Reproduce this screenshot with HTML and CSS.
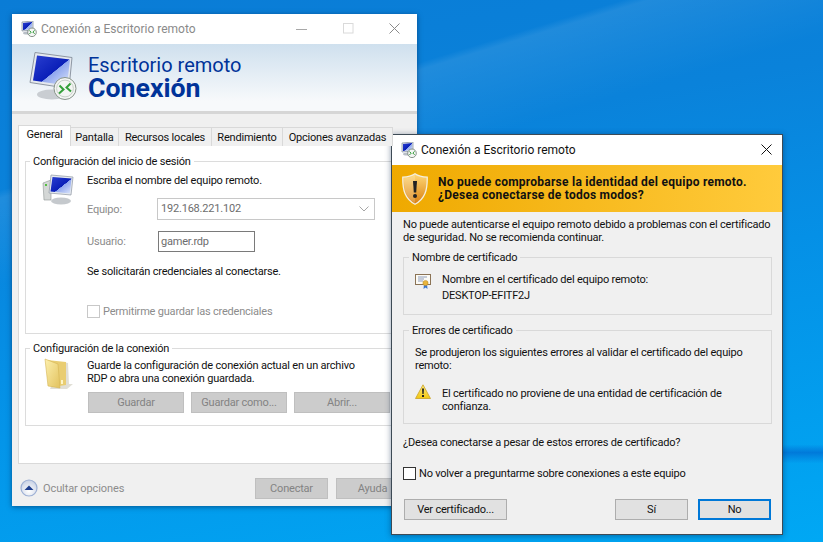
FILE: index.html
```html
<!DOCTYPE html>
<html lang="es">
<head>
<meta charset="utf-8">
<title>Conexión a Escritorio remoto</title>
<link rel="stylesheet" href="styles.css">
</head>
<body>
<svg class="defs" width="0" height="0" aria-hidden="true">
  <defs>
    <linearGradient id="scr" x1="0" y1="0" x2="1" y2="1"><stop offset="0" stop-color="#2a3fd0"/><stop offset=".55" stop-color="#0a1fb8"/><stop offset=".56" stop-color="#8fa6ee"/><stop offset="1" stop-color="#dfe8fb"/></linearGradient>
    <linearGradient id="shield" x1="0" y1="0" x2="0" y2="1"><stop offset="0" stop-color="#ffd877"/><stop offset="1" stop-color="#d97f10"/></linearGradient>
    <linearGradient id="folder" x1="0" y1="0" x2="1" y2="1"><stop offset="0" stop-color="#fdf0ae"/><stop offset="1" stop-color="#e2c25e"/></linearGradient>
    <linearGradient id="tri" x1="0" y1="0" x2="0" y2="1"><stop offset="0" stop-color="#ffe97a"/><stop offset="1" stop-color="#f2c811"/></linearGradient>
    <radialGradient id="orb" cx=".5" cy=".7" r=".7"><stop offset="0" stop-color="#ffffff"/><stop offset="1" stop-color="#c6d0e4"/></radialGradient>
    <symbol id="app" viewBox="0 0 16 16">
      <path d="M1 1 12 0 12 9 1 10Z" fill="#dfe3ea" stroke="#7f8a99" stroke-width=".7"/>
      <path d="M2 2 11 1 11 8 2 9Z" fill="url(#scr)"/>
      <ellipse cx="6" cy="12" rx="4" ry="1.6" fill="#b8bec6"/>
      <circle cx="11" cy="11.3" r="4.3" fill="#f4f6f4" stroke="#6d7a70" stroke-width=".8"/>
      <path d="M8.4 9.600 10.200 11.200 8.400 13M13.600 9.400 11.800 11 13.600 12.800" fill="none" stroke="#2f9a35" stroke-width="1"/>
    </symbol>
  </defs>
</svg>

<section class="win win-main">
  <header class="titlebar">
    <svg class="ic16"><use href="#app"/></svg>
    <span class="title title-off">Conexión a Escritorio remoto</span>
    <span class="ctrls">
      <svg class="c-min" width="12" height="12" viewBox="0 0 12 12"><path d="M0 6.5H11" stroke="#a8a8a8"/></svg>
      <svg width="12" height="12" viewBox="0 0 12 12"><rect x=".5" y=".5" width="9.5" height="9.5" fill="none" stroke="#dadada"/></svg>
      <svg width="12" height="12" viewBox="0 0 12 12"><path d="M.5.5 10.5 10.5M10.5.5.5 10.5" stroke="#8a8a8a" fill="none"/></svg>
    </span>
  </header>
  <div class="banner">
    <svg class="banner-ic" viewBox="0 0 48 48">
      <ellipse cx="23" cy="42" rx="15" ry="5" fill="#c9cdd2"/>
      <path d="M6 0 43 5 40 36 1 30Z" fill="#e4e8ee" stroke="#8e97a3"/>
      <path d="M8 3 41 7 38 33 4 28Z" fill="url(#scr)"/>
      <circle cx="36" cy="36" r="11" fill="#f3f5f3" stroke="#87938a"/>
      <circle cx="36" cy="36" r="8.4" fill="none" stroke="#c7cfc9"/>
      <path d="M30.500 33 34.500 37 30 41M41.500 31 37.500 35 42 39" fill="none" stroke="#34a03a" stroke-width="2"/>
    </svg>
    <div class="banner-txt">
      <div class="b-light">Escritorio remoto</div>
      <div class="b-bold">Conexión</div>
    </div>
  </div>
  <div class="tabwrap">
    <nav class="tabs">
      <span class="tab tab-on tw-gen">General</span>
      <span class="tab tw-pan">Pantalla</span>
      <span class="tab tw-rec">Recursos locales</span>
      <span class="tab tw-ren">Rendimiento</span>
      <span class="tab tw-opc">Opciones avanzadas</span>
    </nav>
    <div class="panel">
      <fieldset class="grp grp-login">
        <legend>Configuración del inicio de sesión</legend>
        <div class="grp-row">
          <svg class="grp-ic" viewBox="0 0 32 32">
            <path d="M1 9 9 6 9 26 2 26Z" fill="#d4d7d6" stroke="#8f9693" stroke-width=".6"/>
            <rect x="3" y="10" width="2" height="2" fill="#55c040"/>
            <ellipse cx="19" cy="27" rx="10" ry="3.500" fill="#c5c9cd"/>
            <path d="M9 1 31 3 29 21 7 19Z" fill="#e6eaee" stroke="#8e97a3" stroke-width=".7"/>
            <path d="M10.500 3 29.500 4.500 28 19.500 8.500 17.500Z" fill="url(#scr)"/>
          </svg>
          <div class="grp-body">
            <p class="line">Escriba el nombre del equipo remoto.</p>
            <div class="field f-equipo">
              <span class="flabel">Equipo:</span>
              <span class="combo">192.168.221.102
                <svg class="chev" width="10" height="6" viewBox="0 0 10 6"><path d="M.5.5 5 5 9.500.5" fill="none" stroke="#a6a6a6"/></svg>
              </span>
            </div>
            <div class="field f-usuario">
              <span class="flabel">Usuario:</span>
              <span class="input">gamer.rdp</span>
            </div>
            <p class="line l-cred">Se solicitarán credenciales al conectarse.</p>
            <label class="chk chk-off"><span class="box"></span>Permitirme guardar las credenciales</label>
          </div>
        </div>
      </fieldset>
      <fieldset class="grp grp-conn">
        <legend>Configuración de la conexión</legend>
        <div class="grp-row">
          <svg class="grp-ic" viewBox="0 0 32 32">
            <path d="M20 4 26 5 27 26 31 26 25 31 8 31Z" fill="#c8c4b4" opacity=".55"/>
            <path d="M5 2 24 4 24 27 10 29Z" fill="#e9cd72"/>
            <path d="M3 1 16 6 18 30 6 28Z" fill="url(#folder)" stroke="#d5b654" stroke-width=".6"/>
            <rect x="19" y="22" width="2" height="4" fill="#fdf5c8"/>
          </svg>
          <div class="grp-body">
            <p class="line">Guarde la configuración de conexión actual en un archivo</p>
            <p class="line">RDP o abra una conexión guardada.</p>
            <div class="btnrow">
              <span class="btn btn-off bw-96">Guardar</span>
              <span class="btn btn-off bw-96">Guardar como...</span>
              <span class="btn btn-off bw-96">Abrir...</span>
            </div>
          </div>
        </div>
      </fieldset>
    </div>
  </div>
  <footer class="foot">
    <svg class="orb" viewBox="0 0 18 18">
      <circle cx="9" cy="9" r="8" fill="url(#orb)" stroke="#9db0d4" stroke-width="1.200"/>
      <path d="M4.500 11 9 6.500 13.500 11Z" fill="#1f3f8f"/>
    </svg>
    <span class="hide-opts">Ocultar opciones</span>
    <span class="btn btn-off bw-73 b-con">Conectar</span>
    <span class="btn btn-off bw-73 b-ayu">Ayuda</span>
  </footer>
</section>

<section class="win win-dlg">
  <header class="titlebar tb-dlg">
    <svg class="ic16"><use href="#app"/></svg>
    <span class="title">Conexión a Escritorio remoto</span>
    <svg class="x" width="12" height="12" viewBox="0 0 12 12"><path d="M.5.5 10.500 10.500M10.500.5.500 10.500" stroke="#111" fill="none"/></svg>
  </header>
  <div class="warnband">
    <svg class="shield" viewBox="0 0 26 32">
      <path d="M13 .8C17 3.500 21 4 25.200 4.200 25.500 17 23 26 13 31.300 3 26 .5 17 .8 4.200 5 4 9 3.500 13 .8Z" fill="url(#shield)" stroke="#f4efe0" stroke-width="1.300"/>
      <path d="M13 2 13 30C4 25 2 17 2 5.200 6 5 9.500 4.500 13 2Z" fill="#fff" opacity=".18"/>
      <path d="M11 8 15 8 14.200 19.500 11.800 19.500Z" fill="#222"/>
      <circle cx="13" cy="23" r="2" fill="#222"/>
    </svg>
    <div class="warnmsg">
      <div>No puede comprobarse la identidad del equipo remoto.</div>
      <div>¿Desea conectarse de todos modos?</div>
    </div>
  </div>
  <div class="dlgbody">
    <p class="line">No puede autenticarse el equipo remoto debido a problemas con el certificado</p>
    <p class="line">de seguridad. No se recomienda continuar.</p>
    <fieldset class="grp-d gd-name">
      <legend>Nombre de certificado</legend>
      <div class="d-row">
        <svg class="ic16 cert" viewBox="0 0 16 16">
          <rect x=".5" y=".5" width="15" height="10" fill="#fbfaf5" stroke="#8b7355"/>
          <path d="M3 3H12M3 5H9M3 7H8" stroke="#8f9dbb"/>
          <path d="M9 10 8.500 15 10.500 13.500 12.500 15 12 10Z" fill="#3a76d0"/>
          <circle cx="10.500" cy="9" r="2.600" fill="#e9b53d" stroke="#b5871f" stroke-width=".5"/>
        </svg>
        <div class="d-txt">
          <p class="line">Nombre en el certificado del equipo remoto:</p>
          <p class="line l-host">DESKTOP-EFITF2J</p>
        </div>
      </div>
    </fieldset>
    <fieldset class="grp-d gd-err">
      <legend>Errores de certificado</legend>
      <div class="err-in">
        <p class="line">Se produjeron los siguientes errores al validar el certificado del equipo</p>
        <p class="line">remoto:</p>
        <div class="d-row d-row-warn">
          <svg class="ic16" viewBox="0 0 16 16">
            <path d="M8 .8 15.500 14.500H.5Z" fill="url(#tri)" stroke="#c9a227" stroke-width=".8" stroke-linejoin="round"/>
            <path d="M7 4.500H9L8.600 10H7.400Z" fill="#222"/>
            <rect x="7" y="11" width="2" height="2" fill="#222"/>
          </svg>
          <div class="d-txt">
            <p class="line">El certificado no proviene de una entidad de certificación de</p>
            <p class="line">confianza.</p>
          </div>
        </div>
      </div>
    </fieldset>
    <p class="line l-q">¿Desea conectarse a pesar de estos errores de certificado?</p>
    <label class="chk chk-d"><span class="box"></span>No volver a preguntarme sobre conexiones a este equipo</label>
    <div class="d-btns">
      <span class="btn bw-103">Ver certificado...</span>
      <span class="d-spacer"></span>
      <span class="btn bw-73">Sí</span>
      <span class="btn bw-73 btn-def">No</span>
    </div>
  </div>
</section>
</body>
</html>
```

FILE: styles.css
```css
* { box-sizing: border-box; }
html, body { margin: 0; height: 100%; }
body {
  width: 823px;
  height: 542px;
  overflow: hidden;
  position: relative;
  font-family: Roboto, "Liberation Sans", sans-serif;
  font-size: 11px;
  letter-spacing: -.2px;
  line-height: 13px;
  color: #111;
  background:
    linear-gradient(180deg, transparent 82%, rgba(0,90,200,.55) 83.5%, transparent 85.5%) right top / 41px 100% no-repeat,
    linear-gradient(163deg, transparent 24%, rgba(255,255,255,.09) 25%, transparent 36%),
    linear-gradient(170deg, #0a7cd6 0%, #0a82da 30%, #0590e6 55%, #00a8f4 100%);
}
.defs { position: absolute; }
p { margin: 0; }
.line { height: 13px; white-space: nowrap; }

.win { position: absolute; background: #f0f0f0; }
.win-main {
  left: 12px; top: 14px; width: 405px; height: 492px;
  display: flex; flex-direction: column;
  box-shadow: 0 1px 5px rgba(0,30,70,.55);
}
.win-dlg {
  left: 391px; top: 134px; width: 392px; height: 401px;
  border: 1px solid #3d4a55;
  display: flex; flex-direction: column;
  box-shadow: 0 1px 6px rgba(0,30,70,.45);
}

.titlebar {
  height: 30px; flex: none;
  background: #fff;
  display: flex; align-items: center;
  padding-left: 9px;
}
.tb-dlg { padding-left: 9px; padding-right: 9px; }
.ic16 { width: 16px; height: 16px; flex: none; }
.title { margin-left: 4px; font-size: 12px; letter-spacing: 0; }
.title-off { color: #8a8a8a; }
.ctrls { margin-left: auto; display: flex; gap: 34px; padding-right: 16px; }
.c-min { margin-right: 1px; }
.x { margin-left: auto; }

.banner {
  height: 70px; flex: none;
  background: linear-gradient(#cfe0ee, #f7f9fb 85%);
  border-bottom: 3px solid #d6d6d6;
  display: flex;
  padding: 8px 0 0 17px;
}
.banner-ic { width: 48px; height: 49px; }
.banner-txt { margin-left: 11px; color: #003399; letter-spacing: 0; }
.b-light { font-size: 20px; line-height: 24px; margin-top: 1px; }
.b-bold { font-size: 26.7px; line-height: 22px; font-weight: 700; }

.tabwrap { padding: 11px 0 0 6px; height: 353px; flex: none; }
.tabs { display: flex; align-items: flex-end; height: 21px; position: relative; z-index: 1; }
.tab {
  height: 19px; line-height: 19px;
  background: #f0f0f0;
  border: 1px solid #d9d9d9; border-left: 0; border-bottom: 0;
  text-align: center;
  white-space: nowrap;
}
.tab-on { height: 21px; background: #fff; border-left: 1px solid #d9d9d9; line-height: 17px; }
.tw-gen { width: 53px; }
.tw-pan { width: 48px; }
.tw-rec { width: 93px; }
.tw-ren { width: 71px; }
.tw-opc { width: 110px; }
.panel {
  height: 319px; margin-top: -1px;
  background: #fff;
  border: 1px solid #d9d9d9;
  padding: 9px 6px 0 6px;
}

fieldset { margin: 0; min-width: 0; }
legend { padding: 0 3px; line-height: 13px; white-space: nowrap; }
.grp {
  border: 1px solid #dcdcdc;
  padding: 0;
  width: 381px;
}
.grp legend { margin-left: 4px; }
.grp-login { height: 179px; }
.grp-conn { height: 84px; margin-top: 8px; }
.grp-row { display: flex; padding-left: 16px; }
.grp-ic { width: 32px; height: 32px; flex: none; }
.grp-login .grp-ic { margin-top: 6px; }
.grp-conn .grp-ic { margin-top: 3px; }
.grp-body { margin-left: 13px; flex: 1; min-width: 0; }
.grp-login .grp-body { padding-top: 6px; }
.grp-conn .grp-body { padding-top: 4px; }
.field { display: flex; align-items: center; color: #8c8c8c; }
.flabel { width: 70px; flex: none; }
.f-equipo { margin-top: 11px; }
.f-usuario { margin-top: 11px; }
.combo {
  width: 218px; height: 22px;
  border: 1px solid #c8c8c8;
  padding-left: 3px;
  line-height: 20px;
  display: flex; align-items: center; justify-content: space-between;
  padding-right: 5px;
  background: #fff;
  color: #6d6d6d;
}
.input {
  width: 97px; height: 21px; margin-left: 1px;
  border: 1px solid #7a7a7a;
  line-height: 19px; padding-left: 2px;
  color: #6d6d6d;
}
.l-cred { margin-top: 13px; }
.chk { display: flex; align-items: center; white-space: nowrap; }
.box { width: 13px; height: 13px; border: 1px solid #333; background: #fff; margin-right: 3px; flex: none; }
.chk-off { color: #8c8c8c; margin-top: 27px; }
.chk-off .box { border-color: #c8c8c8; }
.btnrow { display: flex; gap: 7px; margin-top: 7px; margin-left: 1px; }
.btn {
  height: 21px; flex: none;
  display: flex; align-items: center; justify-content: center;
  background: #e1e1e1;
  border: 1px solid #adadad;
  white-space: nowrap;
}
.btn-off { background: #cccccc; border-color: #bfbfbf; color: #838383; }
.bw-96 { width: 96px; }
.bw-73 { width: 73px; }
.bw-103 { width: 103px; }
.btn-def { border: 2px solid #0078d7; }

.foot { flex: 1; display: flex; align-items: center; padding: 3px 0 0 8px; }
.orb { width: 18px; height: 18px; flex: none; }
.hide-opts { margin-left: 5px; color: #8c8c8c; letter-spacing: -.1px; }
.b-con { margin-left: auto; }
.b-ayu { margin-left: 8px; margin-right: 8px; }

.warnband {
  height: 47px; flex: none;
  background: linear-gradient(90deg, #efa900, #ffcb3c);
  display: flex; align-items: center;
  padding-left: 10px;
}
.shield { width: 26px; height: 32px; flex: none; }
.warnmsg { margin-left: 10px; font-weight: 700; font-size: 12px; letter-spacing: .25px; color: #111; white-space: nowrap; }
.dlgbody { flex: 1; padding: 6px 11px 0 11px; display: flex; flex-direction: column; }
.grp-d { border: 1px solid #d9d9d9; padding: 0; width: 369px; }
.grp-d legend { margin-left: 5px; }
.gd-name { height: 64px; margin-top: 7px; }
.gd-err { height: 100px; margin-top: 9px; }
.err-in { padding: 9px 0 0 11px; }
.d-row { display: flex; align-items: flex-start; }
.gd-name .d-row { padding: 9px 0 0 11px; }
.cert { margin-top: 1px; }
.d-txt { margin-left: 11px; }
.l-host { margin-top: 3px; }
.d-row-warn { margin-top: 12px; }
.d-row-warn .d-txt { margin-top: 3px; }
.l-q { margin-top: 12px; }
.chk-d { margin-top: 18px; }
.d-btns { display: flex; gap: 10px; margin-top: 19px; padding: 0 0 0 1px; }
.d-spacer { flex: 1; }
```
